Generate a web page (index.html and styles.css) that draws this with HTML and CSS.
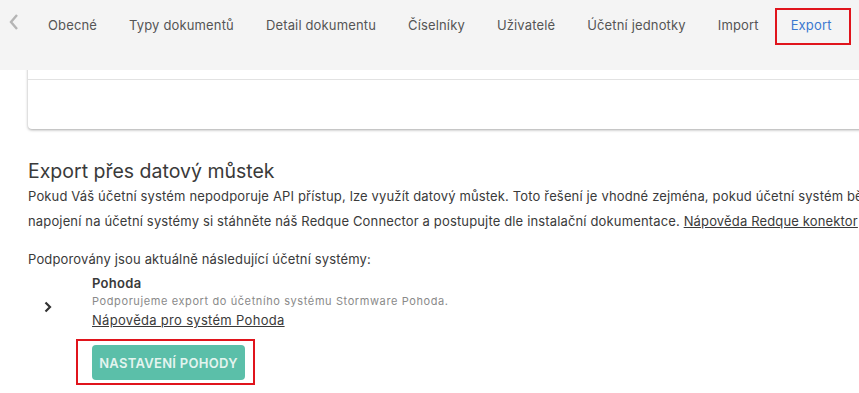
FILE: index.html
```html
<!DOCTYPE html>
<html lang="cs">
<head>
<meta charset="utf-8">
<link rel="stylesheet" href="styles.css">
</head>
<body>
<nav class="tabs">
  <span class="tabs-prev"><svg width="12" height="18" viewBox="0 0 12 18"><path d="M9 2 L3 9 L9 16" fill="none" stroke="#b5b5b5" stroke-width="2.4"/></svg></span>
  <a class="tab">Obecné</a>
  <a class="tab">Typy dokumentů</a>
  <a class="tab">Detail dokumentu</a>
  <a class="tab">Číselníky</a>
  <a class="tab">Uživatelé</a>
  <a class="tab">Účetní jednotky</a>
  <a class="tab">Import</a>
  <a class="tab tab-active">Export</a>
</nav>
<main class="content">
  <div class="card"><div class="card-line"></div></div>
  <h2 class="heading">Export přes datový můstek</h2>
  <p class="text">Pokud Váš účetní systém nepodporuje API přístup, lze využít datový můstek. Toto řešení je vhodné zejména, pokud účetní systém běží lokálně.<br>napojení na účetní systémy si stáhněte náš Redque Connector a postupujte dle instalační dokumentace. <a class="link">Nápověda Redque konektor</a></p>
  <p class="text supported">Podporovány jsou aktuálně následující účetní systémy:</p>
  <div class="system">
    <span class="system-arrow"><svg width="10" height="12" viewBox="0 0 10 12"><path d="M2.5 1.5 L7 6 L2.5 10.5" fill="none" stroke="#333" stroke-width="2.2"/></svg></span>
    <div class="system-body">
      <div class="system-name">Pohoda</div>
      <div class="system-desc">Podporujeme export do účetního systému Stormware Pohoda.</div>
      <a class="link system-link">Nápověda pro systém Pohoda</a>
      <div class="btn-wrap"><button class="btn">NASTAVENÍ POHODY</button></div>
    </div>
  </div>
</main>
</body>
</html>
```
FILE: styles.css
```css
html, body {
  margin: 0;
  padding: 0;
  background: #fff;
  overflow: hidden;
}
body {
  width: 859px;
  height: 393px;
  font-family: "Inter", "Noto Sans", sans-serif;
  color: #3a3a3a;
}
.tabs {
  position: relative;
  z-index: 2;
  height: 70px;
  background: #f4f4f4;
  display: flex;
  align-items: flex-start;
  white-space: nowrap;
  overflow: hidden;
}
.tabs-prev {
  width: 32px;
  padding-left: 8px;
  padding-top: 13px;
  box-sizing: border-box;
  flex: none;
}
.tab {
  display: block;
  padding: 17px 16px 0;
  height: 30px;
  font-size: 13px;
  letter-spacing: 0.15px;
  color: #555;
  flex: none;
}
.tab-active {
  color: #3b78d0;
  outline: 2px solid #e0141c;
  outline-offset: -2px;
  margin: 8px 0 0 0;
  padding: 9px 16px 0;
  height: 28px;
  width: 44px;
}
.content {
  padding-left: 28px;
  height: 323px;
  overflow: hidden;
}
.card {
  margin-top: -8px;
  height: 67px;
  background: #fff;
  border-radius: 0 0 0 4px;
  box-shadow: 0 1px 3px rgba(0,0,0,0.35);
  margin-right: -20px;
  position: relative;
}
.card-line {
  position: absolute;
  left: 0; right: 0;
  top: 17px;
  height: 1px;
  background: #e2e2e2;
}
.heading {
  margin: 29px 0 0;
  font-weight: 400;
  font-size: 19.5px;
  line-height: 26px;
  color: #3a3a3a;
}
.text {
  margin: 0;
  font-size: 13px;
  letter-spacing: 0.15px;
  line-height: 25px;
  white-space: nowrap;
}
.supported {
  margin-top: 13px;
}
.link {
  color: #3a3a3a;
  text-decoration: underline;
}
.system {
  display: flex;
  margin-top: 2px;
}
.system-arrow {
  width: 64px;
  padding-left: 15px;
  padding-top: 23px;
  box-sizing: border-box;
  flex: none;
}
.system-body {
  display: flex;
  flex-direction: column;
  align-items: flex-start;
}
.system-name {
  font-weight: 600;
  font-size: 13px;
  letter-spacing: 0.3px;
  line-height: 18px;
}
.system-desc {
  font-size: 11px;
  letter-spacing: 0.6px;
  color: #8a8a8a;
  line-height: 18px;
}
.system-link {
  font-size: 13px;
  letter-spacing: 0.3px;
  line-height: 20px;
}
.btn-wrap {
  margin-top: 9px;
  margin-left: -16px;
  padding: 6px 10px 5px 16px;
  outline: 2px solid #e0141c;
  outline-offset: -2px;
}
.btn {
  display: block;
  width: 153px;
  height: 35px;
  border: none;
  border-radius: 4px;
  background: #5bbfa9;
  color: #e4f4ef;
  font-family: "Inter", sans-serif;
  font-weight: 600;
  font-size: 13px;
  letter-spacing: 0.3px;
  padding: 0;
}
```
